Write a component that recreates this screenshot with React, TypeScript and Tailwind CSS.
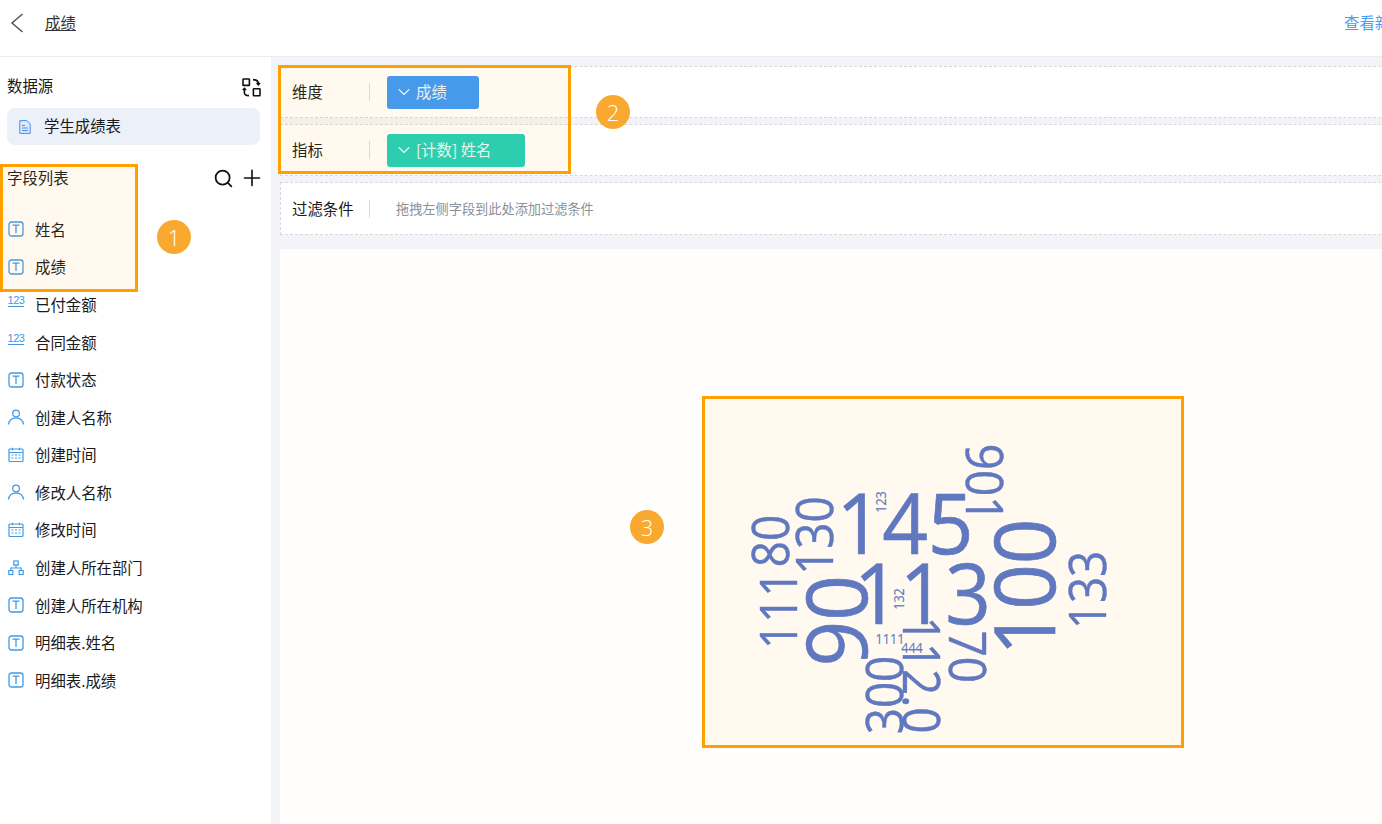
import { ChevronDown, Plus, Search } from 'lucide-react'

const font = '"Noto Sans CJK SC", sans-serif'

function BackIcon() {
  return (
    <svg width="14" height="20" viewBox="0 0 14 20" fill="none" stroke="#555" strokeWidth="1.5">
      <path d="M12.5 1 2 10l10.5 9" />
    </svg>
  )
}

function TextIcon() {
  return (
    <svg width="16" height="16" viewBox="0 0 16 16" fill="none" stroke="#3f9ae6" strokeWidth="1.3">
      <rect x="1" y="1" width="14" height="14" rx="2.5" />
      <path d="M4.5 4.2h7M8 4.2v7.8" />
    </svg>
  )
}

function NumberIcon() {
  return (
    <div className="-mt-[7px] flex h-[13px] w-4 flex-col items-center">
      <span className="text-[11px] leading-[12px] tracking-[-0.5px] text-[#3f9ae6] font-['Liberation_Sans']">123</span>
      <span className="h-px w-4 shrink-0 bg-[#3f9ae6]" />
    </div>
  )
}

function UserIcon() {
  return (
    <svg width="16" height="16" viewBox="0 0 16 16" fill="none" stroke="#3f9ae6" strokeWidth="1.2">
      <circle cx="8" cy="4.5" r="3.4" />
      <path d="M0.6 15.5c0-4 3.2-6.6 7.4-6.6s7.4 2.6 7.4 6.6" />
    </svg>
  )
}

function DateIcon() {
  return (
    <svg width="16" height="16" viewBox="0 0 16 16" fill="none" stroke="#3f9ae6" strokeWidth="1.2">
      <rect x="1" y="2" width="14" height="12.5" rx="1" />
      <path d="M1 5.5h14M4.5 0.8v2.4M11.5 0.8v2.4" />
      <path d="M3.5 8h2M7 8h2M10.5 8h2M3.5 11h2M7 11h2M10.5 11h2" />
    </svg>
  )
}

function OrgIcon() {
  return (
    <svg width="16" height="16" viewBox="0 0 16 16" fill="none" stroke="#3f9ae6" strokeWidth="1.2">
      <rect x="5.8" y="1" width="4.4" height="4" />
      <rect x="0.8" y="10.5" width="4" height="4" />
      <rect x="11.2" y="10.5" width="4" height="4" />
      <path d="M8 5v3M2.8 10.5V8h10.4v2.5" />
    </svg>
  )
}

function SwapIcon() {
  return (
    <svg width="19" height="19" viewBox="0 0 19 19" fill="none" stroke="#111" strokeWidth="1.6">
      <rect x="1" y="1" width="6.4" height="6.4" rx="0.5" />
      <rect x="11.4" y="10.8" width="6.6" height="7" rx="0.5" />
      <path d="M11 1.6c3 0 5.4 1.2 5.4 4.8M14.6 5l1.8 1.8L18 5" />
      <path d="M2.4 10.5v4.2c0 1.8 1.4 2.9 4.6 2.9M0.8 12l1.6-1.6L4 12" />
    </svg>
  )
}

function DocIcon() {
  return (
    <svg width="12" height="14" viewBox="0 0 12 14" fill="none" stroke="#4a8df0" strokeWidth="1">
      <path d="M0.8 0.6h7l3.4 3.4v9.4H0.8z" fill="#dfe9fb" />
      <path d="M3 5.5h3M3 8h6M3 10.5h6" />
    </svg>
  )
}

const fields = [
  { name: '姓名', icon: <TextIcon /> },
  { name: '成绩', icon: <TextIcon /> },
  { name: '已付金额', icon: <NumberIcon /> },
  { name: '合同金额', icon: <NumberIcon /> },
  { name: '付款状态', icon: <TextIcon /> },
  { name: '创建人名称', icon: <UserIcon /> },
  { name: '创建时间', icon: <DateIcon /> },
  { name: '修改人名称', icon: <UserIcon /> },
  { name: '修改时间', icon: <DateIcon /> },
  { name: '创建人所在部门', icon: <OrgIcon /> },
  { name: '创建人所在机构', icon: <TextIcon /> },
  { name: '明细表.姓名', icon: <TextIcon /> },
  { name: '明细表.成绩', icon: <TextIcon /> },
]

// x, y are the middle of each word, in page pixels
const words = [
  { text: '145', x: 905, y: 524, size: 85, rot: 0 },
  { text: '113', x: 922.5, y: 594, size: 85, rot: 0 },
  { text: '100', x: 1025, y: 587, size: 85, rot: -90 },
  { text: '90', x: 836.7, y: 620.7, size: 85, rot: -90 },
  { text: '111', x: 779, y: 610, size: 51, rot: -90 },
  { text: '80', x: 771, y: 541, size: 51, rot: -90 },
  { text: '130', x: 815, y: 535.7, size: 51, rot: -90 },
  { text: '133', x: 1088, y: 590, size: 51, rot: -90 },
  { text: '300', x: 885, y: 695, size: 51, rot: -90 },
  { text: '901', x: 984, y: 483, size: 51, rot: 90 },
  { text: '70', x: 967, y: 656.7, size: 51, rot: 90 },
  { text: '112.0', x: 921.7, y: 675, size: 51, rot: 90 },
  { text: '123', x: 881, y: 502, size: 14, rot: -90 },
  { text: '132', x: 899, y: 599, size: 14, rot: -90 },
  { text: '1111', x: 890, y: 638.7, size: 14, rot: 0 },
  { text: '444', x: 912, y: 647.7, size: 14, rot: 0 },
]

function WordCloud() {
  return (
    <svg viewBox="705 399 476 346" className="h-full w-full" fill="#6078bf" stroke="#6078bf" fontFamily="'Open Sans', sans-serif">
      {words.map((w) => (
        <text
          key={w.text}
          y={w.size * 0.357}
          fontSize={w.size}
          strokeWidth={w.size / 120}
          textAnchor="middle"
          transform={`translate(${w.x} ${w.y}) rotate(${w.rot}) scale(${w.size > 60 ? 0.94 : 0.9} 1)`}
        >
          {w.text}
        </text>
      ))}
    </svg>
  )
}

function Badge({ n, className }: { n: number; className: string }) {
  return (
    <div className={`absolute flex h-[34px] w-[34px] items-center justify-center rounded-full bg-[#f9a92f] text-[22px] font-light text-white font-['Open_Sans'] ${className}`}>
      {n}
    </div>
  )
}

function Row({ label, children, className }: { label: string; children: React.ReactNode; className: string }) {
  return (
    <div className={`flex items-center border border-dashed border-[#d6d6de] bg-white pl-[11px] ${className}`}>
      <div className="w-[78px] border-r border-[#dcdcdc] text-[15.4px] leading-[18px] text-[#1a1a1a]">
        <span className="block -translate-y-px">{label}</span>
      </div>
      <div className="ml-[17px] flex items-center">{children}</div>
    </div>
  )
}

function Chip({ text, className }: { text: string; className: string }) {
  return (
    <div className={`flex h-[33px] items-center gap-[2px] rounded-[3px] pl-[7px] text-[15.4px] text-white/90 ${className}`}>
      <ChevronDown size={20} strokeWidth={1.3} />
      <span>{text}</span>
    </div>
  )
}

export default function App() {
  return (
    <div className="relative flex h-[824px] w-[1382px] flex-col overflow-hidden bg-white" style={{ fontFamily: font }}>
      <div className="flex h-[57px] shrink-0 items-center justify-between border-b border-[#ebebf0] bg-white pb-[10px] pl-[10px]">
        <div className="flex items-center">
          <BackIcon />
          <a className="ml-[21px] text-[15.4px] text-[#333] underline">成绩</a>
        </div>
        <span className="w-[38px] overflow-hidden whitespace-nowrap text-[15.4px] text-[#4a9cf5]">查看新数据</span>
      </div>

      <div className="flex min-h-0 flex-1">
        <aside className="w-[271px] shrink-0 bg-white px-[7px] pt-[20px]">
          <div className="flex h-[19px] items-center justify-between pr-[3px] text-[15.4px] text-[#1a1a1a]">
            <span className="-translate-y-px">数据源</span>
            <div className="translate-y-px"><SwapIcon /></div>
          </div>
          <div className="mt-[12px] flex h-[37px] w-[253px] items-center gap-[13px] rounded-lg bg-[#ecf1f9] pl-[12px] text-[15.4px] text-[#1a1a1a]">
            <DocIcon />
            <span className="-translate-y-px">学生成绩表</span>
          </div>
          <div className="mt-[23px] flex h-[20px] w-[253px] items-center justify-between text-[15.4px] text-[#1a1a1a]">
            <span>字段列表</span>
            <div className="-mr-[5px] flex items-center gap-[5px]">
              <Search size={21} strokeWidth={2} className="text-[#111]" />
              <Plus size={26} strokeWidth={1.5} className="text-[#111]" />
            </div>
          </div>
          <ul className="mt-[22.5px]">
            {fields.map((f) => (
              <li key={f.name} className="flex h-[37.6px] items-center gap-[11px] pl-px text-[15.4px] text-[#1a1a1a]">
                {f.icon}
                <span>{f.name}</span>
              </li>
            ))}
          </ul>
        </aside>

        <main className="w-[1111px] shrink-0 bg-[#f3f4f8] pl-[9px] pt-[9px]">
          <div className="w-[1326px]">
            <Row label="维度" className="h-[52px]">
              <Chip text="成绩" className="w-[92px] bg-[#3b99f8]" />
            </Row>
            <Row label="指标" className="mt-[6px] h-[52px]">
              <Chip text="[计数] 姓名" className="w-[138px] bg-[#20d0bb]" />
            </Row>
            <Row label="过滤条件" className="mt-[6px] h-[53px]">
              <span className="ml-[9px] text-[13.2px] text-[#8a8f99]">拖拽左侧字段到此处添加过滤条件</span>
            </Row>
            <div className="mt-[14px] flex h-[646px] items-center justify-center bg-[#fffefd]">
              <div className="h-[352px] w-[482px] border-[3px] border-[#ffa000] bg-[#fff9ef]">
                <WordCloud />
              </div>
            </div>
          </div>
        </main>
      </div>

      <div className="absolute left-0 top-[164px] h-[128px] w-[138px] border-[3px] border-[#ffa000] bg-[#ffa000]/[0.06]" />
      <div className="absolute left-[278px] top-[65px] h-[109px] w-[293px] border-[3px] border-[#ffa000] bg-[#ffa000]/[0.06]" />
      <Badge n={1} className="left-[157px] top-[220px]" />
      <Badge n={2} className="left-[596px] top-[95px]" />
      <Badge n={3} className="left-[630px] top-[510px]" />
    </div>
  )
}
